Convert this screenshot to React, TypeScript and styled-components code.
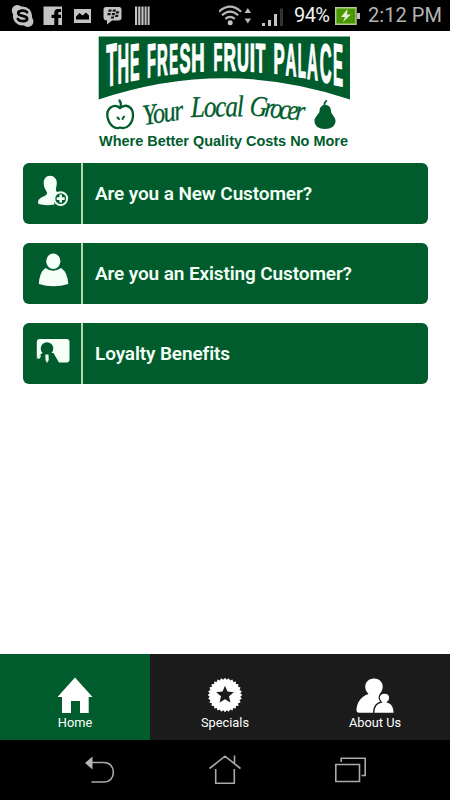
import React from 'react';
import styled, { createGlobalStyle } from 'styled-components';

const GREEN = '#005c2c';

const GlobalStyle = createGlobalStyle`
  * { box-sizing: border-box; }
  body { margin: 0; background: #fff; font-family: Roboto, "Liberation Sans", sans-serif; }
`;

const Screen = styled.div`
  width: 450px;
  height: 800px;
  display: flex;
  flex-direction: column;
  background: #fefefe;
  overflow: hidden;
`;

const StatusBar = styled.header`
  height: 31px;
  flex: none;
  background: #000;
  color: #c4c4c4;
  display: flex;
  align-items: center;
`;

const StatusArt = styled.svg`
  display: block;
  flex: none;
`;

const StatusText = styled.span<{ $width: number; $bright?: boolean }>`
  width: ${(p) => p.$width}px;
  flex: none;
  font-size: 20px;
  line-height: 33px;
  white-space: nowrap;
  color: ${(p) => (p.$bright ? '#f0f0f0' : '#b4b4b4')};
  letter-spacing: ${(p) => (p.$bright ? '-0.6px' : '0.05px')};
`;

const Content = styled.main`
  flex: 1;
  min-height: 0;
`;

const Brand = styled.svg`
  display: block;
  margin: 5px auto 0 98px;
  overflow: visible;
`;

const Menu = styled.nav`
  display: flex;
  flex-direction: column;
  gap: 19px;
  padding: 9px 22px 0 22.5px;
`;

const MenuButton = styled.button`
  display: flex;
  height: 61px;
  padding: 0;
  border: 0;
  border-radius: 6px;
  overflow: hidden;
  background: ${GREEN};
  color: #f4fff6;
  text-align: left;
  font: 600 19px Roboto, "Liberation Sans", sans-serif;
  letter-spacing: -0.12px;
`;

const MenuIcon = styled.span`
  width: 60px;
  height: 61px;
  flex: none;
  border-right: 2px solid #b3d7a8;
`;

const MenuLabel = styled.span`
  padding-left: 12.5px;
  line-height: 62px;
  white-space: nowrap;
`;

const Tabs = styled.nav`
  height: 86px;
  flex: none;
  display: grid;
  grid-template-columns: repeat(3, 1fr);
`;

const Tab = styled.button<{ $active?: boolean }>`
  border: 0;
  padding: 20px 0 0;
  display: flex;
  flex-direction: column;
  align-items: center;
  background: ${(p) => (p.$active ? GREEN : '#1b1b1b')};
  color: #fff;
  font: 400 12.8px/18px Roboto, "Liberation Sans", sans-serif;
`;

const TabIcon = styled.svg`
  display: block;
  flex: none;
`;

const SystemBar = styled.footer`
  height: 60px;
  flex: none;
  background: #000;
  display: flex;
  justify-content: center;
`;

type Glyph = [char: string, left: number, right: number];

const headline: Glyph[] = [
  ['T', 106, 117], ['H', 118, 128.5], ['E', 130.5, 139.5],
  ['F', 147.5, 156], ['R', 157.5, 168], ['E', 169.5, 178], ['S', 179.5, 190.5], ['H', 192, 204],
  ['F', 214, 222.5], ['R', 224, 236], ['U', 237.5, 248.5], ['I', 250.5, 254.3], ['T', 255.5, 265.5],
  ['P', 274, 284.5], ['A', 285, 297], ['L', 298, 306], ['A', 306.5, 318.5], ['C', 320, 331.5], ['E', 333.5, 343],
];

/* Left and right ink edges of the bold capitals, in em. */
const ink: Record<string, [number, number]> = {
  T: [0.02, 0.59], H: [0.067, 0.655], E: [0.067, 0.625], F: [0.067, 0.58], R: [0.067, 0.7],
  S: [0.03, 0.63], U: [0.06, 0.66], I: [0.067, 0.21], P: [0.067, 0.63], A: [0, 0.72],
  L: [0.067, 0.58], C: [0.045, 0.68],
};

const SIZE = 20;

const archTransform = ([char, left, right]: Glyph) => {
  const mid = (left + right) / 2;
  const d = (mid - 225) / 119;
  const bottom = 70.5 + 16.5 * d * d;
  const slope = (26 * d) / 119;
  const top = 43.8 + Math.abs(d);
  const [a, b] = ink[char];
  const sx = (right - left - 1.1) / ((b - a) * SIZE);
  const sy = (bottom - top) / (0.688 * SIZE);
  const x = left + 0.55 - a * SIZE * sx;
  const y = bottom - slope * (mid - x);
  return `matrix(${sx} ${slope * sx} 0 ${sy} ${x} ${y})`;
};

const Logo = () => (
  <Brand width="254" height="118" viewBox="98 36 254 118" aria-label="The Fresh Fruit Palace">
    <path d="M98.7 36.5H350V99.5Q225 57 98.7 99.5Z" fill={GREEN} />
    <g fontFamily="Liberation Sans" fontWeight="700" fontSize={SIZE}>
      {headline.map((g, i) => (
        <g key={i} transform={archTransform(g)}>
          <text fill="#fff" stroke="#fff" strokeWidth="1.1" vectorEffect="non-scaling-stroke">{g[0]}</text>
        </g>
      ))}
    </g>
    <g fill={GREEN} fontFamily="Liberation Serif" fontStyle="italic" stroke={GREEN} strokeWidth=".3">
      <text transform="translate(144 125) rotate(-8) scale(.84 1)" fontSize="29" textLength="49">Your</text>
      <text transform="translate(191 117) rotate(-1) scale(.84 1)" fontSize="30" textLength="63">Local</text>
      <text transform="translate(249 115) rotate(6) scale(.84 1)" fontSize="29" textLength="66">Grocer</text>
    </g>
    <g fill="none" stroke={GREEN} strokeWidth="2.3" strokeLinecap="round">
      <path d="M120 108C114 103 106 108 107.5 117C109 125 115 130 120 127.5C127 130 133 123 133 115C133 107 126 103 120 108Z" />
      <path d="M120.5 107Q121.5 103 119.5 100.5" />
      <path d="M117.5 117.5L119 119M124 116.5L122.5 119" strokeWidth="2" />
    </g>
    <path d="M325 105C321 105 319.5 108 319.5 112C318 115 314.5 117 314.5 121C314.5 126 319 129 325 129C331 129 335.5 126 335.5 121C335.5 117 332 115 331 112C331 107 329 105 325 105Z" fill={GREEN} />
    <path d="M324.5 106Q324 102 327 100.5" fill="none" stroke={GREEN} strokeWidth="1.8" />
    <text x="99" y="146" fill={GREEN} fontFamily="Liberation Sans" fontWeight="700" fontSize="14.5" textLength="249" lengthAdjust="spacingAndGlyphs">Where Better Quality Costs No More</text>
  </Brand>
);

const StatusIcons = () => (
  <StatusArt width="219" height="31" viewBox="0 0 219 31" fill="#c4c4c4">
    <circle cx="22.5" cy="16" r="9.6" />
    <circle cx="17.4" cy="10.5" r="5.6" />
    <circle cx="27.8" cy="21.4" r="5.6" />
    <path d="M27 12.2C24.8 9.7 18.2 10.3 18.2 13.2C18.2 16.9 27.1 14.9 27.1 18.7C27.1 22 19.5 22 17.8 18.9" fill="none" stroke="#000" strokeWidth="2.7" strokeLinecap="round" />
    <path d="M43.5 6.5H62V25H58.3V18H61V14.8H58.3V13Q58.3 12 59.5 12H61V9H58Q54.3 9 54.3 12.6V14.8H51.5V18H54.3V25H43.5Z" />
    <path fillRule="evenodd" d="M74 9H91V23H74ZM76 19.5H89V15.5L86 12.5L82.5 15.5L79.5 13L76 16.5Z" />
    <path d="M106 7H119Q121.5 7 121.5 9.5V17.5Q121.5 20.5 118.5 20.5H112L107 24.5V20.5Q103.5 20.5 103.5 17V9.5Q103.5 7 106 7Z" />
    <path d="M108.7 9.5h3l-.5 2.2h-3zM113 9.5h3l-.5 2.2h-3zM107.8 13h3l-.5 2.2h-3zM112.1 13h3l-.5 2.2h-3zM116.2 11.2h3l-.5 2.2h-3zM115.5 14.8h3l-.5 2.2h-3zM111.3 16.5h3l-.5 2h-3z" fill="#111" />
    <path d="M135 6.5h2.2V25H135zM138.2 6.5h2.2V25h-2.2zM141.4 6.5h2.2V25h-2.2zM144.6 6.5h2V25h-2zM147.6 6.5h2V25h-2z" />
  </StatusArt>
);

const SignalIcons = () => (
  <StatusArt width="75" height="31" viewBox="219 0 75 31">
    <g fill="none" stroke="#b8b8b8" strokeWidth="2.1">
      <path d="M218.8 11.7Q230 1.7 241.2 11.7M222 15.3Q230 7.8 238.2 15.3M225.4 18.9Q230 14.7 234.8 18.9" />
    </g>
    <circle cx="230.2" cy="22.8" r="2.5" fill="#c4c4c4" />
    <path d="M244.6 13L247.8 8L251 13ZM244.6 18.5H251L247.8 23.5Z" fill="#bbb" />
    <path d="M262 23h3v3h-3zM268 20h3v6h-3zM274 14h3v12h-3z" fill="#c4c4c4" />
    <path d="M280 8.5h3V26h-3z" fill="#333" />
  </StatusArt>
);

const Battery = () => (
  <StatusArt width="33" height="31" viewBox="335 0 33 31">
    <path d="M335.7 7.7H356V24.3H335.7Z" fill="#4a9800" stroke="#b6c99a" strokeWidth="1.4" />
    <path d="M357 13h3v6h-3z" fill="#c0c0c0" />
    <path d="M347.5 9L341 17H345L343 22L351 14.5H347Z" fill="#e3edd5" />
  </StatusArt>
);

const NewCustomerIcon = () => (
  <svg width="58" height="61" viewBox="22.5 163 58 61">
    <path d="M49.5 175.8C45.5 175.8 43 179 43.2 183.5C43.4 188 45.5 190 46.5 192.5C47 196 42 196 39.5 198.5Q36.5 201 38 204Q45 206 54 204.5Q52.5 195 57.5 192.2C54 191 56 188 56.3 183.5C56.6 179 53.5 175.8 49.5 175.8Z" fill="#f4fff7" />
    <circle cx="60.2" cy="198.6" r="6.4" fill={GREEN} stroke="#f1fff4" strokeWidth="2" />
    <path d="M60.2 194.6V202.6M56.2 198.6H64.2" stroke="#f1fff4" strokeWidth="2.6" />
  </svg>
);

const ExistingIcon = () => (
  <svg width="58" height="61" viewBox="22.5 243 58 61" fill="#f4fff7">
    <ellipse cx="52.8" cy="261.3" rx="7.1" ry="7.7" />
    <path d="M45 268Q52.5 273.5 60.5 268Q67 272 67.8 284Q53 288.5 38.3 284Q39 272 45 268Z" />
  </svg>
);

const LoyaltyIcon = () => (
  <svg width="58" height="61" viewBox="22.5 323 58 61">
    <rect x="36.3" y="339" width="32.7" height="23.5" rx="3" fill="#f4fff7" />
    <path d="M36 357.5L42 353H53L59 363.5H36Z" fill={GREEN} />
    <circle cx="46.5" cy="348.5" r="6.3" fill={GREEN} />
    <path d="M36 358L39.5 354.5L40.5 356.5L38.5 359ZM44.8 354.5H48L48.3 360L46.6 363L45 360Z" fill="#eaffee" />
  </svg>
);

const HomeIcon = () => (
  <TabIcon width="38" height="40" viewBox="56 674 38 40">
    <path d="M75 677.5L92.5 697H88.7V713H80V701H71V713H62V697H57.5Z" fill="#fff" />
  </TabIcon>
);

const sealPoints = Array.from({ length: 56 }, (_, i) => {
  const angle = (i * Math.PI) / 28;
  const r = i % 2 ? 15.4 : 17.3;
  return `${19 + r * Math.sin(angle)},${21 - r * Math.cos(angle)}`;
}).join(' ');

const starPoints = Array.from({ length: 10 }, (_, i) => {
  const angle = (i * Math.PI) / 5;
  const r = i % 2 ? 4.2 : 9.3;
  return `${19 + r * Math.sin(angle)},${21 - r * Math.cos(angle)}`;
}).join(' ');

const SpecialsIcon = () => (
  <TabIcon width="38" height="40" viewBox="0 0 38 40">
    <polygon points={sealPoints} fill="#fff" />
    <polygon points={starPoints} fill="#1b1b1b" />
  </TabIcon>
);

const AboutIcon = () => (
  <TabIcon width="40" height="40" viewBox="355 674 40 40">
    <g fill="#fff">
      <path d="M373.8 678.5C369 678.5 365.2 682 365.2 687C365.2 690 367 692 368.5 694C361 696.5 356.5 703 356.5 710Q356.5 712.7 359 712.7H380V695L379.5 694C381.5 692 382.7 689.5 382.7 686.5C382.7 682 379 678.5 373.8 678.5Z" />
      <path d="M384.3 693C381 693 379 695.3 379.2 698C379.4 700 380.5 701.3 381.2 702C376.5 703 373.6 706.5 373.6 713.4H394.3C394.3 706.5 392.5 703.2 387.7 702C389 701 389.8 699.8 389.8 698C389.8 695 387.5 693 384.3 693Z" stroke="#1b1b1b" strokeWidth="1.3" />
    </g>
  </TabIcon>
);

const SystemIcons = () => (
  <StatusArt width="450" height="60" viewBox="0 740 450 60" fill="none" stroke="#a9a9a9" strokeWidth="1.6">
    <path d="M91 762.5H104C116.5 762.5 116.5 782 104 782H91.5" />
    <path d="M92.5 756.5V769.5L85 763Z" fill="#b5b5b5" stroke="none" />
    <path d="M209.5 768.5L225 756.2L240.5 768.5M215.7 769V783.3H234.3V769M234.5 755.5V763" />
    <path d="M335.8 764.5H359.5V781.5H335.8ZM341.2 762V758.3H365.2V775.5H361.5" />
  </StatusArt>
);

const menuItems = [
  { label: 'Are you a New Customer?', Icon: NewCustomerIcon },
  { label: 'Are you an Existing Customer?', Icon: ExistingIcon },
  { label: 'Loyalty Benefits', Icon: LoyaltyIcon },
];

const tabItems = [
  { label: 'Home', Icon: HomeIcon },
  { label: 'Specials', Icon: SpecialsIcon },
  { label: 'About Us', Icon: AboutIcon },
];

export default function App() {
  return (
    <Screen>
      <GlobalStyle />
      <StatusBar>
        <StatusIcons />
        <SignalIcons />
        <StatusText $width={41} $bright>94%</StatusText>
        <Battery />
        <StatusText $width={80}>2:12 PM</StatusText>
      </StatusBar>
      <Content>
        <Logo />
        <Menu>
          {menuItems.map(({ label, Icon }) => (
            <MenuButton key={label}>
              <MenuIcon><Icon /></MenuIcon>
              <MenuLabel>{label}</MenuLabel>
            </MenuButton>
          ))}
        </Menu>
      </Content>
      <Tabs>
        {tabItems.map(({ label, Icon }, i) => (
          <Tab key={label} $active={i === 0}>
            <Icon />
            <span>{label}</span>
          </Tab>
        ))}
      </Tabs>
      <SystemBar><SystemIcons /></SystemBar>
    </Screen>
  );
}
